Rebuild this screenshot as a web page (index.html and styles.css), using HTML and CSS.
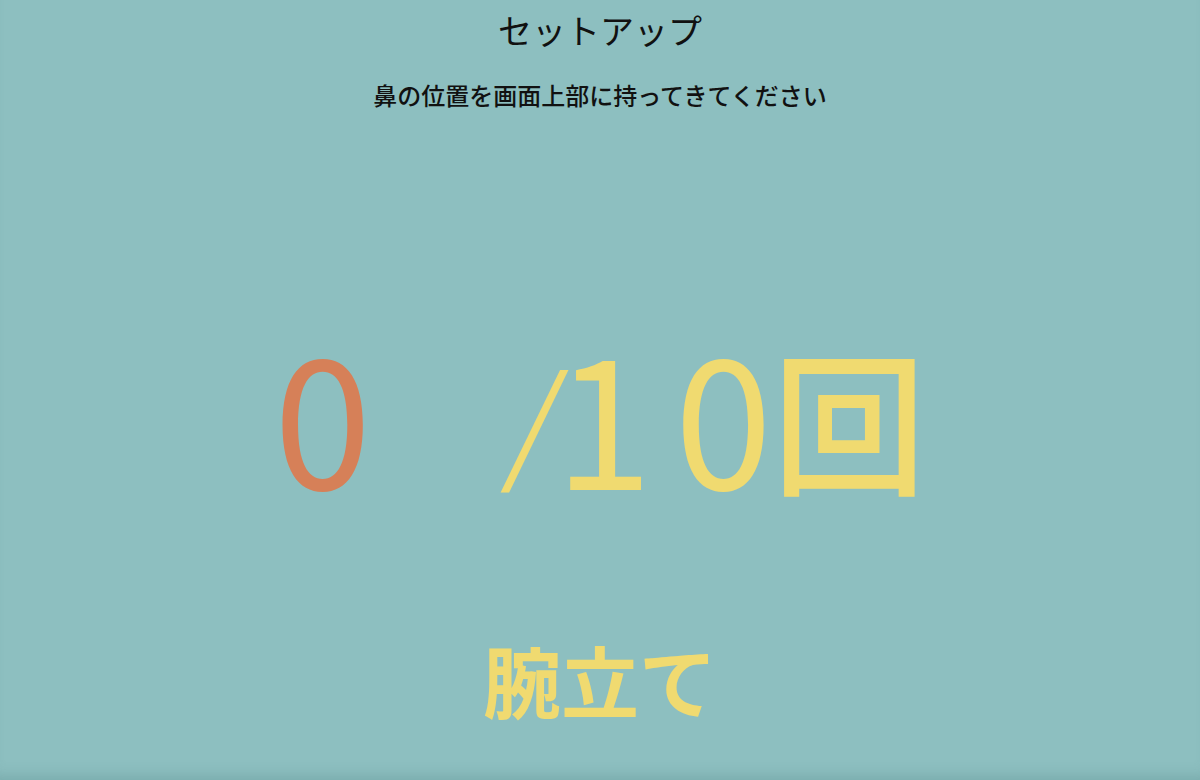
FILE: index.html
```html
<!DOCTYPE html>
<html lang="ja">
<head>
<meta charset="utf-8">
<link rel="stylesheet" href="styles.css">
</head>
<body>
<main class="screen">
  <h1 class="title">セットアップ</h1>
  <p class="guide">鼻の位置を画面上部に持ってきてください</p>
  <div class="counter">
    <span class="count">0</span>
    <span class="total"><span class="slash">/</span><span class="num">10</span><span class="unit">回</span></span>
  </div>
  <div class="exercise">腕立て</div>
</main>
</body>
</html>
```

FILE: styles.css
```css
html, body {
  margin: 0;
  padding: 0;
  height: 100%;
}
body {
  background: #8dbfc0;
  font-family: "Noto Sans CJK JP", "Noto Sans", sans-serif;
  overflow: hidden;
}
.screen {
  height: 780px;
  display: flex;
  flex-direction: column;
  align-items: center;
  box-shadow: inset 0 -14px 14px -10px rgba(60, 110, 110, 0.25);
  box-sizing: border-box;
}
.title {
  margin: 8px 0 0;
  font-size: 34px;
  font-weight: 400;
  line-height: 44px;
  color: #111;
}
.guide {
  margin: 27px 0 0;
  font-size: 24px;
  font-weight: 500;
  line-height: 32px;
  color: #111;
}
.counter {
  margin-top: 213px;
  display: flex;
  align-items: baseline;
  gap: 125px;
  line-height: 180px;
  font-size: 176px;
  font-weight: 400;
}
.count {
  color: #d68058;
}
.total {
  color: #f0da70;
  white-space: nowrap;
}
.slash {
  display: inline-block;
  font-size: 126px;
  vertical-align: 20px;
  margin-left: 17px;
  margin-right: -8px;
  transform: skewX(-10deg);
}
.num {
  display: inline-block;
}
.num::first-letter {
  letter-spacing: 22px;
}
.unit {
  font-size: 154px;
  font-weight: 500;
  vertical-align: 6px;
}
.exercise {
  margin-top: 127px;
  font-size: 78px;
  font-weight: 700;
  line-height: 90px;
  color: #f0da70;
}
```
